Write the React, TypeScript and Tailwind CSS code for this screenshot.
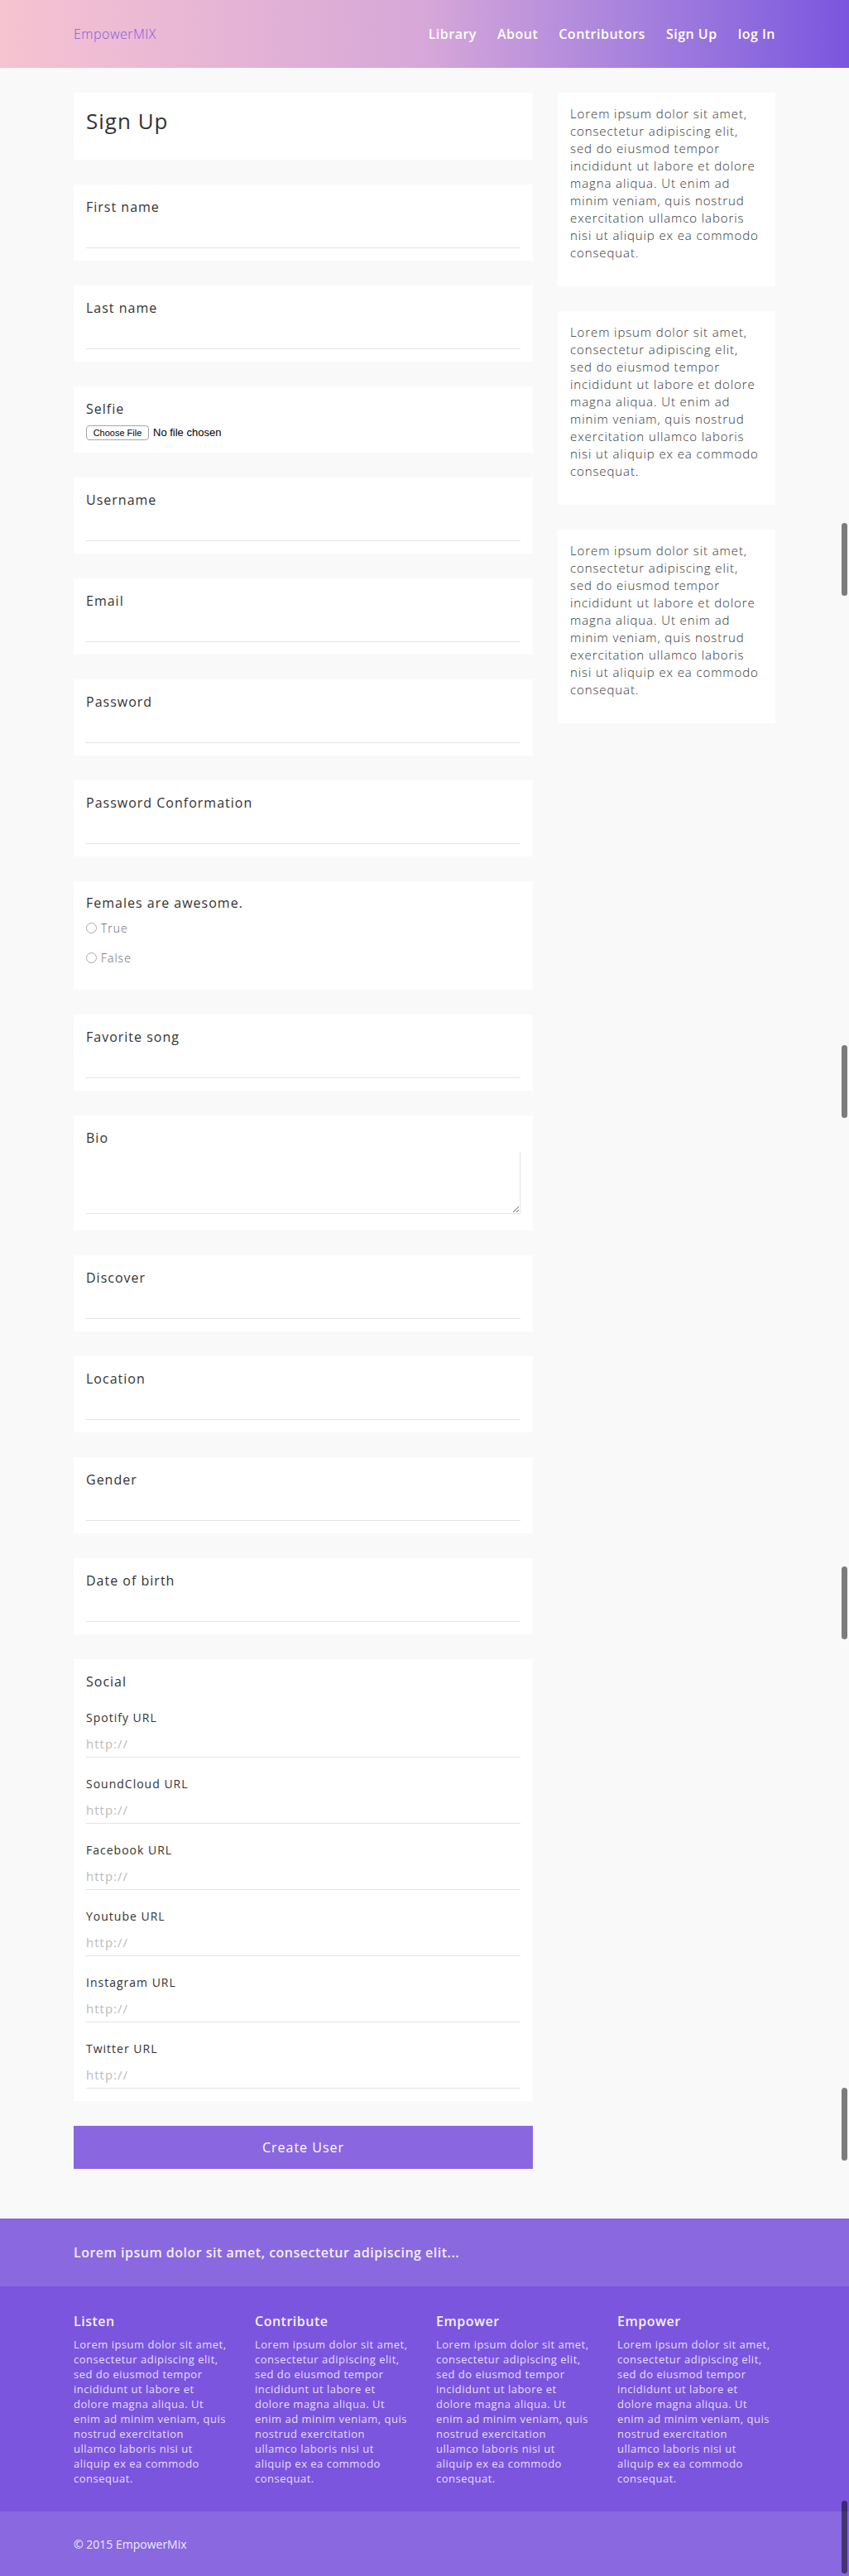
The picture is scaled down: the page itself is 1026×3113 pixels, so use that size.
import React from "react";

const lorem =
  "Lorem ipsum dolor sit amet, consectetur adipiscing elit, sed do eiusmod tempor incididunt ut labore et dolore magna aliqua. Ut enim ad minim veniam, quis nostrud exercitation ullamco laboris nisi ut aliquip ex ea commodo consequat.";

const navLinks = ["Library", "About", "Contributors", "Sign Up", "log In"];
const socials = ["Spotify URL", "SoundCloud URL", "Facebook URL", "Youtube URL", "Instagram URL", "Twitter URL"];
const footerCols = ["Listen", "Contribute", "Empower", "Empower"];
const thumbs = [632, 1263, 1893, 2523, 3022];

function TextField({ label }: { label: string }) {
  return (
    <div className="bg-white p-[15px]">
      <label className="block text-[16px] leading-6 tracking-[1px] text-[#333]">{label}</label>
      <input
        type="text"
        className="mt-[5px] block h-[33px] w-full border-b border-[#e4e4e4] bg-transparent text-[15px] outline-none"
      />
    </div>
  );
}

function SocialField({ label, last }: { label: string; last?: boolean }) {
  return (
    <div className={last ? "" : "mb-[22px]"}>
      <label className="block text-[14px] leading-5 tracking-[1px] text-[#333]">{label}</label>
      <input
        type="text"
        placeholder="http://"
        className="mt-[4px] block h-[34px] w-full border-b border-[#e4e4e4] bg-transparent text-[15px] tracking-[1px] text-[#333] outline-none placeholder:text-[#bbb]"
      />
    </div>
  );
}

function Radio({ label }: { label: string }) {
  return (
    <label className="mb-3 flex h-6 items-center gap-[5px] text-[14px] font-light tracking-[1px] text-[#666]">
      <input
        type="radio"
        name="females"
        className="h-[13px] w-[13px] appearance-none rounded-full border border-[#a9a9a9] bg-white"
      />
      {label}
    </label>
  );
}

export default function App() {
  return (
    <div className="relative min-h-[3113px] bg-[#f9f9f9] font-['Open_Sans',sans-serif]">
      {/* header */}
      <header className="h-[82px] bg-gradient-to-r from-[#f6c3d1] via-[#d7a7d8] to-[#7b55de]">
        <div className="mx-auto flex h-full w-[848px] items-center justify-between">
          <a href="#" className="text-[16px] font-light tracking-[0.5px] text-[#7d5ade]">
            EmpowerMIX
          </a>
          <nav className="flex gap-[25px]">
            {navLinks.map((l) => (
              <a key={l} href="#" className="text-[16px] font-semibold tracking-[0.5px] text-white">
                {l}
              </a>
            ))}
          </nav>
        </div>
      </header>

      <main className="mx-auto flex w-[848px] items-start gap-[30px] pb-[60px] pt-[30px]">
        <form className="flex w-[555px] flex-col gap-[30px]" onSubmit={(e) => e.preventDefault()}>
          <div className="h-[81px] bg-white px-[15px] pt-[16px]">
            <h1 className="text-[26px] leading-9 tracking-[1px] text-[#333]">Sign Up</h1>
          </div>

          <TextField label="First name" />
          <TextField label="Last name" />

          <div className="bg-white p-[15px]">
            <label className="block text-[16px] leading-6 tracking-[1px] text-[#333]">Selfie</label>
            <div className="mt-2 flex h-[18px] items-center gap-[5px] font-['Liberation_Sans',sans-serif]">
              <button
                type="button"
                className="h-[18px] w-[76px] rounded-[4px] border border-[#a6a6a6] bg-white text-[11px] leading-none text-black"
              >
                Choose File
              </button>
              <span className="text-[13px] text-black">No file chosen</span>
            </div>
          </div>

          <TextField label="Username" />
          <TextField label="Email" />
          <TextField label="Password" />
          <TextField label="Password Conformation" />

          <div className="bg-white px-[15px] pb-[15px] pt-[14px]">
            <p className="text-[16px] leading-6 tracking-[1px] text-[#333]">Females are awesome.</p>
            <div className="mt-[6px] flex flex-col">
              <Radio label="True" />
              <Radio label="False" />
            </div>
          </div>

          <TextField label="Favorite song" />

          <div className="bg-white px-[15px] pb-[20px] pt-[15px]">
            <label className="block text-[16px] leading-6 tracking-[1px] text-[#333]">Bio</label>
            <textarea className="mt-[5px] block h-[75px] w-full resize-y border-b border-r border-[#e4e4e4] bg-transparent outline-none" />
          </div>

          <TextField label="Discover" />
          <TextField label="Location" />
          <TextField label="Gender" />
          <TextField label="Date of birth" />

          <div className="bg-white p-[15px]">
            <p className="mb-[22px] text-[16px] leading-6 tracking-[1px] text-[#333]">Social</p>
            {socials.map((s, i) => (
              <SocialField key={s} label={s} last={i === socials.length - 1} />
            ))}
          </div>

          <button type="submit" className="h-[52px] w-full bg-[#8a67e0] text-[16px] tracking-[1px] text-white">
            Create User
          </button>
        </form>

        <aside className="flex w-[263px] flex-col gap-[30px]">
          {[0, 1, 2].map((i) => (
            <div key={i} className="bg-white px-[15px] pb-[30px] pt-[15px]">
              <p className="text-[15px] font-light leading-[21px] tracking-[0.9px] text-[#333]">{lorem}</p>
            </div>
          ))}
        </aside>
      </main>

      <footer className="text-white">
        <div className="h-[82px] bg-[#8a68e0]">
          <div className="mx-auto flex h-full w-[848px] items-center text-[16px] font-semibold tracking-[0.5px] text-[#f3effc]">
            Lorem ipsum dolor sit amet, consectetur adipiscing elit...
          </div>
        </div>
        <div className="h-[272px] bg-[#7b55de] pt-[30px]">
          <div className="mx-auto grid w-[848px] grid-cols-[repeat(4,219px)]">
            {footerCols.map((c, i) => (
              <div key={i} className="pr-[31px]">
                <h3 className="text-[16px] font-semibold leading-6 tracking-[0.5px] text-[#f3effc]">{c}</h3>
                <p className="mt-[7px] text-[13px] leading-[18px] tracking-[0.5px] text-[#e6dffa]">{lorem}</p>
              </div>
            ))}
          </div>
        </div>
        <div className="h-[78px] bg-[#8a68e0]">
          <div className="mx-auto flex h-full w-[848px] items-center text-[14px] text-[#efeafc]">
            © 2015 EmpowerMix
          </div>
        </div>
      </footer>

      {thumbs.map((t) => (
        <div key={t} className="absolute right-[2px] h-[88px] w-[7px] rounded-full bg-black/50" style={{ top: t }} />
      ))}
    </div>
  );
}
